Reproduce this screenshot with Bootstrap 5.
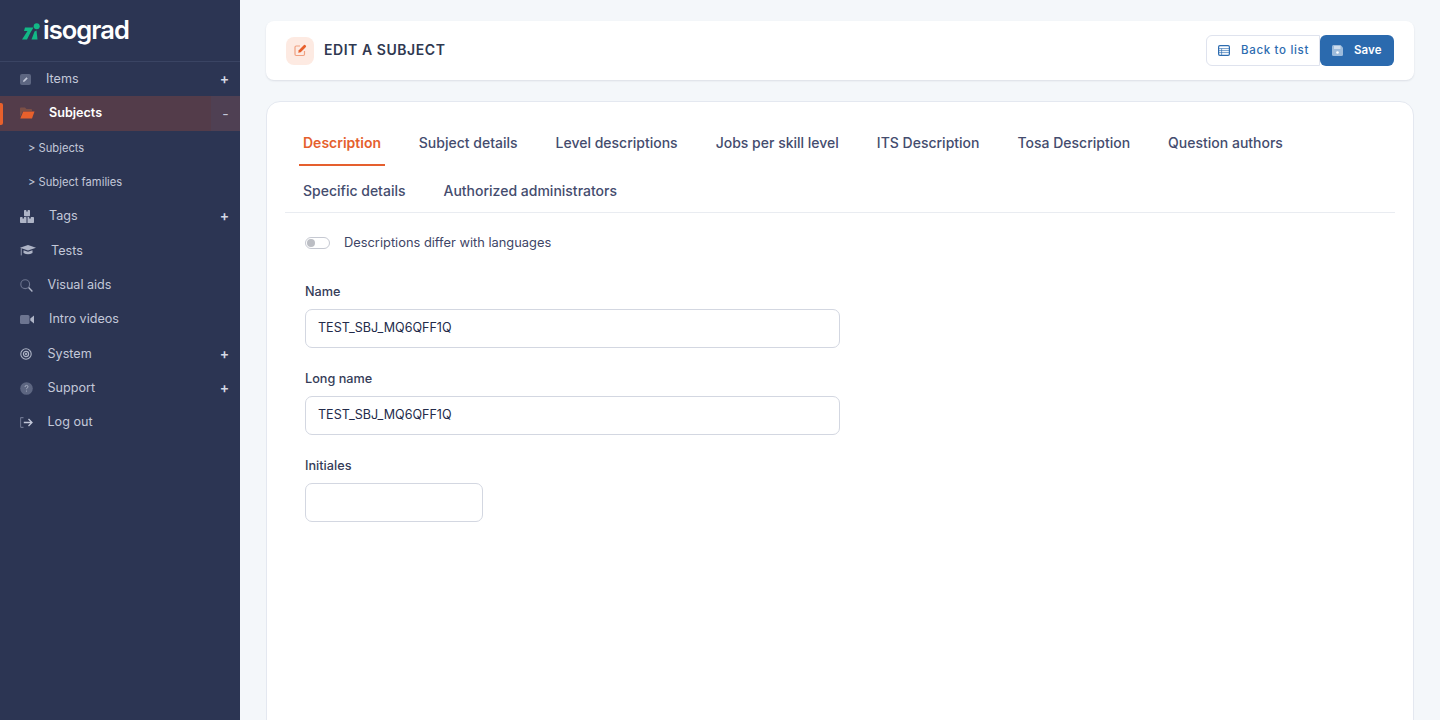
<!DOCTYPE html>
<html lang="en">
<head>
  <meta charset="UTF-8">
  <meta name="viewport" content="width=device-width, initial-scale=1">
  <title>Edit a subject</title>
  <link href="https://cdn.jsdelivr.net/npm/bootstrap@5.3.2/dist/css/bootstrap.min.css" rel="stylesheet">
  <style>
    html, body { height: 720px; overflow: hidden; }
    body { font-family: Inter, "Liberation Sans", sans-serif; background: #f4f7fa; color: #2b3350; }
    .side { width: 240px; height: 720px; flex: none; background: #2c3553; }
    .side-logo { height: 62px; padding: 15px 0 0 22px; border-bottom: 1px solid #3a4463; gap: 3px; }
    .logo-word { font-size: 25.5px; font-weight: 600; line-height: 30px; color: #fff; letter-spacing: -.95px; }
    .menu-row { height: 34.4px; padding-left: 20px; color: #c3c8d9; font-size: 12.6px; position: relative; }
    .menu-row svg { flex: none; }
    .menu-ico { width: 26px; flex: none; display: flex; }
    .menu-plus { margin-left: auto; width: 30px; padding: 0 1px 2px 0; text-align: center; font-size: 14px; font-weight: 600; color: #d5d9e5; }
    .menu-row.on { background: #533c4a; color: #fff; font-weight: 600; height: 35px; padding-bottom: 1px; }
    .menu-row.on::before { content: ""; position: absolute; left: 0; top: 7px; width: 3px; height: 22px; background: #e8602c; border-radius: 0 2px 2px 0; }
    .menu-row.on .menu-plus { width: 29px; height: 35px; background: #4f4053; display: flex; align-items: center; justify-content: center; padding: 0; color: #c3c8d9; font-weight: 400; margin-bottom: -1px; }
    .menu-sub { height: 34px; padding-left: 28px; font-size: 11.2px; color: #c3c8d9; }
    .page-main { padding: 21px 26px 0 26px; min-width: 0; }
    .head-box { height: 59px; background: #fff; border-radius: 8px; box-shadow: 0 1px 2px rgba(40,50,80,.12); padding: 0 20px; }
    .head-ico { width: 28px; height: 28px; border-radius: 8px; background: #fdeae2; }
    .head-title { font-size: 14px; font-weight: 600; letter-spacing: .55px; color: #2f3850; margin: 0 0 3px 10px; }
    .btn-back, .btn-save { height: 31px; font-size: 11.5px; font-weight: 600; display: flex; align-items: center; padding: 0; }
    .btn-back { width: 114px; padding-left: 11px; gap: 11px; background: #fff; color: #2d6cb0; border: 1px solid #dfe3ee; border-radius: 6px 0 0 6px; letter-spacing: .68px; font-weight: 500; }
    .btn-save { width: 74px; padding-left: 12px; gap: 11px; background: #2b6aae; color: #fff; border: 0; border-radius: 6px; letter-spacing: .1px; }
    .body-box { margin-top: 21px; height: 640px; background: #fff; border: 1px solid #e4e8f0; border-radius: 14px; padding: 17px 18px 0; }
    .tab-row { border-bottom: 1px solid #e9ecf1; display: flex; flex-wrap: wrap; list-style: none; margin: 0; padding: 0; height: 94px; align-content: flex-start; }
    .tab-row a { display: block; height: 48px; padding: 0 4px; margin: 0 15px; line-height: 48px; color: #444c6e; font-size: 14px; font-weight: 500; text-decoration: none; }
    .tab-row li:first-child a, .tab-row a.first-in-row { margin-left: 14px; }
    .tab-row li.brk { flex-basis: 100%; height: 0; }
    .tab-row a.on { color: #e55f2e; font-weight: 600; border-bottom: 2px solid #e55f2e; height: 47px; line-height: 47px; margin-right: 14.8px; }
    .form-zone { padding: 20px 0 0 20px; }
    .sw-row { height: 20px; margin-bottom: 31px; font-size: 12.85px; color: #3e4566; gap: 14px; }
    .sw-track { width: 25px; height: 12px; border: 1px solid #c6c9d2; border-radius: 7px; position: relative; background: #fff; }
    .sw-track::before { content: ""; position: absolute; left: 1px; top: 1px; width: 8px; height: 8px; border-radius: 50%; background: #bcbec4; }
    .fld-label { font-size: 12.7px; font-weight: 500; line-height: 16px; margin: 0 0 9px; color: #353c58; }
    .fld-input { width: 535px; height: 39px; border: 1px solid #d3d7e1; border-radius: 7px; font-size: 12.55px; padding: 0 12px 2px; color: #232b4a; margin-bottom: 23px; box-shadow: none; }
    .fld-input.short { width: 178px; }
  </style>
</head>
<body>
  <div class="d-flex">
    <nav class="side">
      <div class="side-logo d-flex align-items-start">
        <svg width="18" height="17" viewBox="0 0 18 17" class="mt-2"><path d="M3 4.5 H11.5 L8.5 9.5 L5 16.5 H0 L5.5 8 H2z" fill="#12b886"/><path d="M9.5 16.5 L12.5 8.5 L14.5 7.5 L15.5 16.5z" fill="#12b886"/><circle cx="14.7" cy="3.2" r="3" fill="#12b886"/></svg>
        <span class="logo-word">isograd</span>
      </div>
      <div>
        <div class="menu-row d-flex align-items-center"><span class="menu-ico"><svg width="11" height="11" viewBox="0 0 11 11"><rect width="11" height="11" rx="2" fill="#5d6681"/><path d="M3 8 l.5-1.7 3-3 1.2 1.2-3 3z" fill="#c3c8d9"/></svg></span>Items<span class="menu-plus">+</span></div>
        <div class="menu-row on d-flex align-items-center"><span class="menu-ico" style="width:29px"><svg width="15" height="12" viewBox="0 0 15 12"><path d="M0 1.5 Q0 .5 1 .5 H5 L6.5 2 H11 Q12 2 12 3 V4 H3 L0 10z" fill="#7c4f46"/><path d="M3.2 4.5 H14.5 L12 11.5 H0.3z" fill="#e8602c"/></svg></span>Subjects<span class="menu-plus">-</span></div>
        <div class="menu-sub d-flex align-items-center">&gt; Subjects</div>
        <div class="menu-sub d-flex align-items-center">&gt; Subject families</div>
        <div class="menu-row d-flex align-items-center"><span class="menu-ico" style="width:29px"><svg width="14" height="13" viewBox="0 0 14 13" fill="#aeb4c6"><path d="M4 .8 Q4 0 4.8 0 H6.3 V1.4 H7.7 V0 H9.2 Q10 0 10 .8 V5.4 Q10 6.2 9.2 6.2 H4.8 Q4 6.2 4 5.4z"/><path d="M0 7.8 Q0 7 .8 7 H2.5 V8.4 H4 V7 H5.7 Q6.5 7 6.5 7.8 V13 H.8 Q0 13 0 12.2z"/><path d="M7.5 7 H9.2 V8.4 H10.8 V7 H13.2 Q14 7 14 7.8 V12.2 Q14 13 13.2 13 H7.5z"/></svg></span>Tags<span class="menu-plus">+</span></div>
        <div class="menu-row d-flex align-items-center"><span class="menu-ico" style="width:31px"><svg width="16" height="11" viewBox="0 0 16 11" fill="#aeb4c6"><path d="M8 0 L16 2.8 L8 5.6 L0 2.8z"/><path d="M3.5 5.2 L8 6.8 L12.5 5.2 V8 Q8 10.6 3.5 8z"/><rect x="0.8" y="3.2" width=".8" height="7.2"/></svg></span>Tests</div>
        <div class="menu-row d-flex align-items-center"><span class="menu-ico" style="width:27.5px"><svg width="13" height="13" viewBox="0 0 13 13" fill="none" stroke="#6d7590" stroke-width="1.1"><circle cx="5.2" cy="5.2" r="4.4"/><path d="M8.6 8.6 L12.4 12.4" stroke="#aeb4c6" stroke-width="1.4"/></svg></span>Visual aids</div>
        <div class="menu-row d-flex align-items-center"><span class="menu-ico" style="width:29px"><svg width="14" height="9" viewBox="0 0 14 9" fill="#6d7590"><rect width="9.5" height="9" rx="1.5"/><path d="M10.3 3.6 L14 .5 V8.5 L10.3 5.4z" fill="#aeb4c6"/></svg></span>Intro videos</div>
        <div class="menu-row d-flex align-items-center"><span class="menu-ico" style="width:27.5px"><svg width="13" height="12" viewBox="0 0 13 12" fill="none" stroke="#aeb4c6"><circle cx="6" cy="6" r="5.2" stroke-width="1.1"/><circle cx="6" cy="6" r="2.6" stroke-width="1.2"/><circle cx="6" cy="6" r=".8" fill="#aeb4c6"/></svg></span>System<span class="menu-plus">+</span></div>
        <div class="menu-row d-flex align-items-center"><span class="menu-ico" style="width:27.5px"><svg width="13" height="13" viewBox="0 0 13 13"><circle cx="6.5" cy="6.5" r="6.3" fill="#5d6681"/><path d="M5 5 Q5 3.4 6.5 3.4 Q8 3.4 8 4.8 Q8 5.7 7 6.1 Q6.5 6.4 6.5 7.2" fill="none" stroke="#aeb4c6" stroke-width=".9"/><circle cx="6.5" cy="9" r=".6" fill="#aeb4c6"/></svg></span>Support<span class="menu-plus">+</span></div>
        <div class="menu-row d-flex align-items-center"><span class="menu-ico" style="width:27.5px"><svg width="13" height="11" viewBox="0 0 13 11" fill="none"><path d="M3.5 .6 H1.2 Q.6 .6 .6 1.2 V9.8 Q.6 10.4 1.2 10.4 H3.5" stroke="#6d7590" stroke-width="1.1"/><path d="M3.8 5.5 H12 M8.5 2 L12 5.5 L8.5 9" stroke="#c3c8d9" stroke-width="1.3"/></svg></span>Log out</div>
      </div>
    </nav>
    <main class="page-main flex-grow-1">
      <div class="head-box d-flex align-items-center">
        <span class="head-ico d-flex align-items-center justify-content-center"><svg width="13" height="13" viewBox="0 0 13 13" fill="none"><path d="M6 2 H2.2 Q1 2 1 3.2 V10.3 Q1 11.5 2.2 11.5 H9.3 Q10.5 11.5 10.5 10.3 V7" stroke="#f0a080" stroke-width="1.2"/><path d="M4.2 8.8 L4.8 6.3 L10 1.1 Q10.6 .6 11.2 1.1 L11.9 1.8 Q12.4 2.4 11.9 3 L6.7 8.2z" fill="#e8602c"/></svg></span>
        <span class="head-title">EDIT A SUBJECT</span>
        <div class="ms-auto d-flex">
          <button class="btn-back"><svg width="12" height="11" viewBox="0 0 12 11" fill="none"><rect x=".6" y=".6" width="10.8" height="9.8" rx="1.3" stroke="#2d6cb0" stroke-width="1.2"/><path d="M.6 3.6 H11.4 M.6 5.6 H11.4 M.6 7.6 H11.4 M3.6 3.6 V10" stroke="#2d6cb0" stroke-width=".9" opacity=".75"/></svg>Back to list</button>
          <button class="btn-save"><svg width="11" height="11" viewBox="0 0 11 11"><path d="M1.5 0 H8.5 L11 2.5 V9.5 Q11 11 9.5 11 H1.5 Q0 11 0 9.5 V1.5 Q0 0 1.5 0z" fill="#9dbbdb"/><rect x="2" y="1" width="6.5" height="3" fill="#cfdded"/><circle cx="5.5" cy="7.5" r="1.3" fill="#fff"/></svg>Save</button>
        </div>
      </div>
      <div class="body-box">
        <ul class="tab-row">
          <li><a class="on" href="#">Description</a></li>
          <li><a href="#">Subject details</a></li>
          <li><a href="#">Level descriptions</a></li>
          <li><a href="#">Jobs per skill level</a></li>
          <li><a href="#">ITS Description</a></li>
          <li><a href="#">Tosa Description</a></li>
          <li><a href="#">Question authors</a></li>
          <li class="brk"></li>
          <li><a class="first-in-row" href="#">Specific details</a></li>
          <li><a href="#">Authorized administrators</a></li>
        </ul>
        <div class="form-zone">
          <div class="sw-row d-flex align-items-center"><span class="sw-track"></span>Descriptions differ with languages</div>
          <label class="fld-label d-block">Name</label>
          <input class="fld-input form-control" value="TEST_SBJ_MQ6QFF1Q">
          <label class="fld-label d-block">Long name</label>
          <input class="fld-input form-control" value="TEST_SBJ_MQ6QFF1Q">
          <label class="fld-label d-block">Initiales</label>
          <input class="fld-input short form-control">
        </div>
      </div>
    </main>
  </div>
  <script src="https://cdn.jsdelivr.net/npm/bootstrap@5.3.2/dist/js/bootstrap.bundle.min.js"></script>
</body>
</html>
